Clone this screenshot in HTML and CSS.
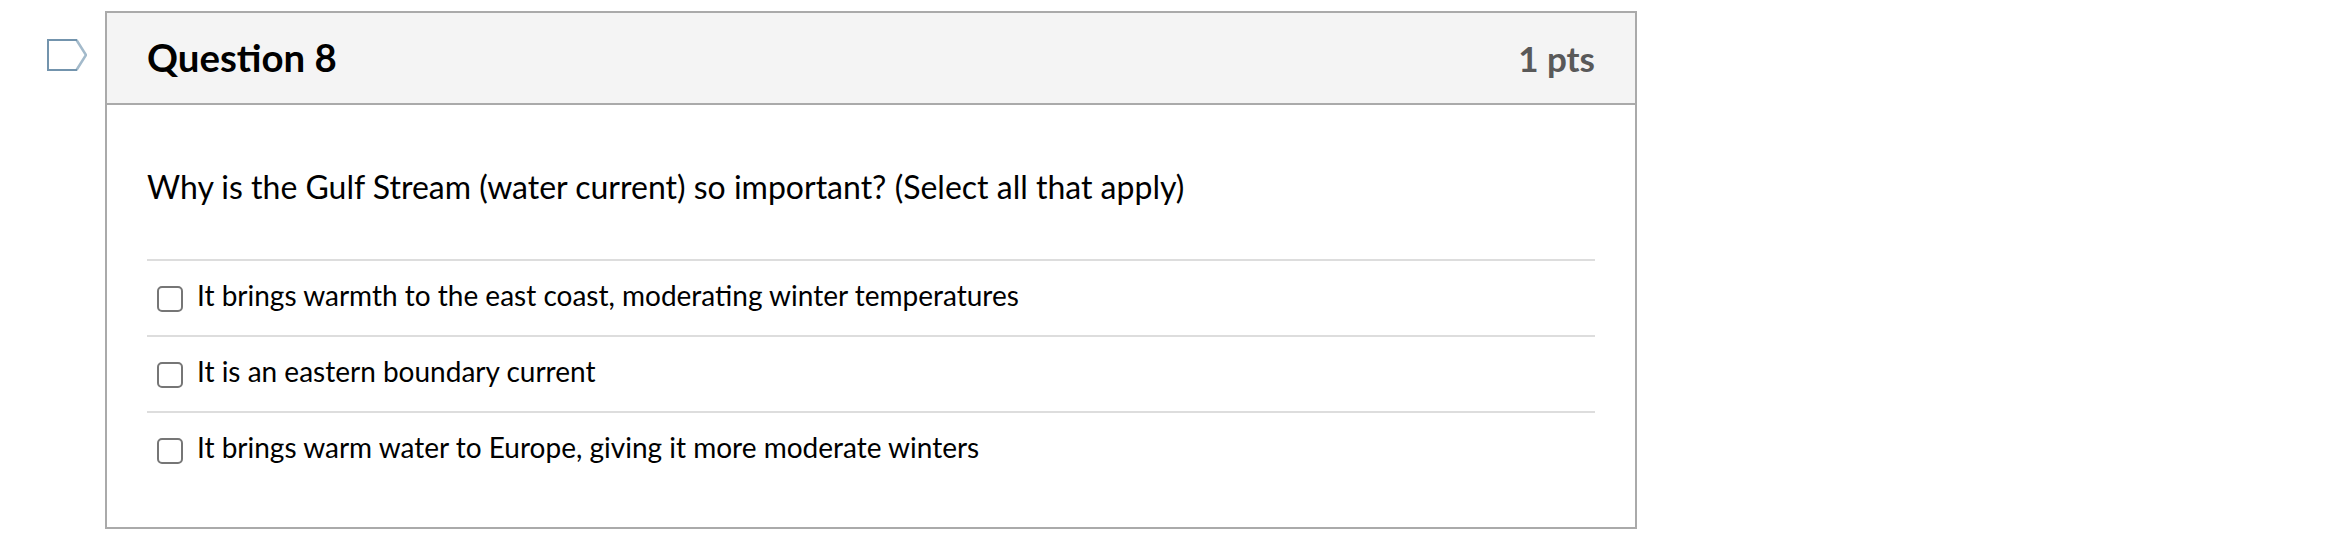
FILE: index.html
```html
<!DOCTYPE html>
<html lang="en">
<head>
  <meta charset="UTF-8" />
  <title>Question 8</title>
  <link rel="stylesheet" href="styles.css">
</head>
<body>
  <div class="question-row">
    <svg class="flag" width="40" height="32" viewBox="0 0 40 32">
      <path class="flag-tip" d="M29.5 1 L39 16 L29.5 31" />
      <path class="flag-body" d="M30 1 H1 V31 H30" />
    </svg>

    <div class="question">
      <div class="header">
        <h2>Question 8</h2>
        <span class="points">1 pts</span>
      </div>

      <div class="text">
        <p>Why is the Gulf Stream (water current) so important? (Select all that apply)</p>

        <div class="answers">
          <label class="answer">
            <input type="checkbox" />
            <span>It brings warmth to the east coast, moderating winter temperatures</span>
          </label>
          <label class="answer">
            <input type="checkbox" />
            <span>It is an eastern boundary current</span>
          </label>
          <label class="answer">
            <input type="checkbox" />
            <span>It brings warm water to Europe, giving it more moderate winters</span>
          </label>
        </div>
      </div>
    </div>
  </div>
</body>
</html>
```
FILE: styles.css
```css
* {
  box-sizing: border-box;
}

body {
  margin: 0;
  background: #fff;
  color: #000;
  font-family: Lato, sans-serif;
}

.question-row {
  display: flex;
  align-items: flex-start;
  padding: 11px 0 0 47px;
}

.flag {
  margin: 28px 18px 0 0;
  fill: none;
  stroke-width: 2;
}

.flag-body {
  stroke: #7394ad;
}

.flag-tip {
  stroke: #a3bacb;
  stroke-width: 2.5;
}

.question {
  width: 1532px;
  height: 518px;
  border: 2px solid #aaa;
}

.header {
  display: flex;
  justify-content: space-between;
  align-items: center;
  height: 92px;
  padding: 0 40px;
  background: #f4f4f4;
  border-bottom: 2px solid #aaa;
}

h2 {
  margin: 0 0 2px;
  font-size: 38.4px;
  line-height: 60px;
}

.points {
  color: #595959;
  font-size: 35px;
  font-weight: bold;
}

.text {
  padding: 58px 40px 0;
}

p {
  margin: 0;
  font-size: 32px;
  line-height: 48px;
}

.answers {
  margin-top: 48px;
}

.answer {
  display: flex;
  height: 76px;
  padding: 16px 10px 0;
  border-top: 2px solid #ddd;
  font-size: 28px;
  line-height: 36px;
}

input {
  appearance: none;
  width: 26px;
  height: 26px;
  margin: 9px 14px 0 0;
  border: 2px solid #767676;
  border-radius: 5px;
  background: #fff;
}
```
